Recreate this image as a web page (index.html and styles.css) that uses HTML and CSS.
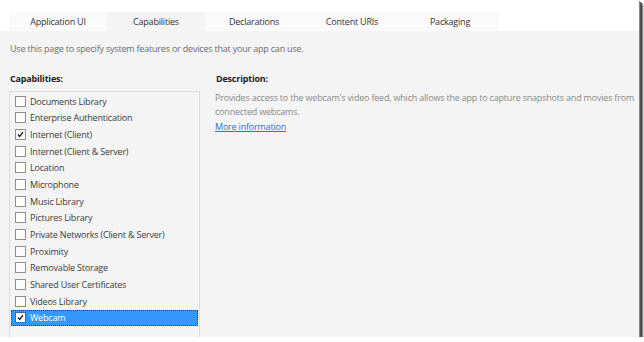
FILE: index.html
```html
<!DOCTYPE html>
<html lang="en">
<head>
    <meta charset="UTF-8">
    <title>Package.appxmanifest - Capabilities</title>
    <link rel="stylesheet" href="styles.css">
</head>
<body>
    <div class="window">
        <div class="tabs">
            <div class="tab">Application UI</div>
            <div class="tab tab-active">Capabilities</div>
            <div class="tab">Declarations</div>
            <div class="tab">Content URIs</div>
            <div class="tab">Packaging</div>
        </div>
        <div class="page">
            <p class="intro">Use this page to specify system features or devices that your app can use.</p>
            <div class="columns">
                <div class="caps">
                    <h2 class="label">Capabilities:</h2>
                    <ul class="cap-list">
                        <li><span class="check"></span>Documents Library</li>
                        <li><span class="check"></span>Enterprise Authentication</li>
                        <li><span class="check checked"><svg viewBox="0 0 11 11"><path d="M2.5 5.5 L4.5 8 L8.5 2.5"/></svg></span>Internet (Client)</li>
                        <li><span class="check"></span>Internet (Client &amp; Server)</li>
                        <li><span class="check"></span>Location</li>
                        <li><span class="check"></span>Microphone</li>
                        <li><span class="check"></span>Music Library</li>
                        <li><span class="check"></span>Pictures Library</li>
                        <li><span class="check"></span>Private Networks (Client &amp; Server)</li>
                        <li><span class="check"></span>Proximity</li>
                        <li><span class="check"></span>Removable Storage</li>
                        <li><span class="check"></span>Shared User Certificates</li>
                        <li><span class="check"></span>Videos Library</li>
                        <li class="selected"><span class="check checked"><svg viewBox="0 0 11 11"><path d="M2.5 5.5 L4.5 8 L8.5 2.5"/></svg></span>Webcam</li>
                    </ul>
                </div>
                <div class="desc">
                    <h2 class="label">Description:</h2>
                    <p class="desc-text">Provides access to the webcam's video feed, which allows the app to capture snapshots and movies from connected webcams.</p>
                    <a class="more" href="#">More information</a>
                </div>
            </div>
        </div>
    </div>
</body>
</html>
```

FILE: styles.css
```css
body {
    margin: 0;
    background-color: white;
    font-family: 'Open Sans', 'Noto Sans', sans-serif;
    font-size: 9px;
    letter-spacing: -0.2px;
    color: #333;
}

.window {
    width: 639px;
    height: 337px;
    display: flex;
    flex-direction: column;
    background-color: white;
    box-shadow: 1px 1px 0 #888, 2px 2px 0 #555, 3px 3px 1px #444, 4px 4px 2px #777;
    overflow: hidden;
}

.tabs {
    display: flex;
    padding: 12px 0 0 9px;
    height: 19px;
}

.tab {
    width: 98px;
    height: 19px;
    line-height: 19px;
    text-align: center;
    background-color: #fafafa;
    color: #333;
}

.tab-active {
    background-color: #f4f4f4;
}

.page {
    flex: 1;
    background-color: #f4f4f4;
    padding: 0 0 0 9px;
    overflow: hidden;
}

.intro {
    margin: 12px 0 0 1px;
    color: #6d6d6d;
    line-height: 12px;
}

.columns {
    display: flex;
    margin-top: 18px;
}

.label {
    margin: 0 0 6px 1px;
    font-size: 9px;
    font-weight: bold;
    color: #1e1e1e;
    line-height: 12px;
}

.caps {
    width: 191px;
}

.cap-list {
    list-style: none;
    margin: 0;
    padding: 1px 1px 20px 1px;
    border: 1px solid #dcdcdc;
}

.cap-list li {
    display: flex;
    align-items: center;
    height: 16.67px;
    padding-left: 4px;
    color: #3c3c3c;
    box-sizing: border-box;
}

.check {
    width: 11px;
    height: 11px;
    box-sizing: border-box;
    border: 1px solid #8e8e8e;
    background-color: #fcfcfc;
    margin-right: 4px;
    display: flex;
}

.check svg {
    width: 9px;
    height: 9px;
    fill: none;
    stroke: #111;
    stroke-width: 1.6;
}

.cap-list li.selected {
    background-color: #3399ff;
    color: white;
    border: 1px dotted #1c3f6a;
    padding-left: 3px;
}

.selected .check {
    background-color: white;
    border-color: #2a6fc0;
}

.desc {
    margin-left: 15px;
    flex: 1;
    padding-right: 4px;
}

.desc-text {
    margin: 0;
    color: #8a8a8a;
    line-height: 13.5px;
}

.more {
    display: inline-block;
    margin-top: 2px;
    color: #2c72c7;
    line-height: 13px;
}
```
